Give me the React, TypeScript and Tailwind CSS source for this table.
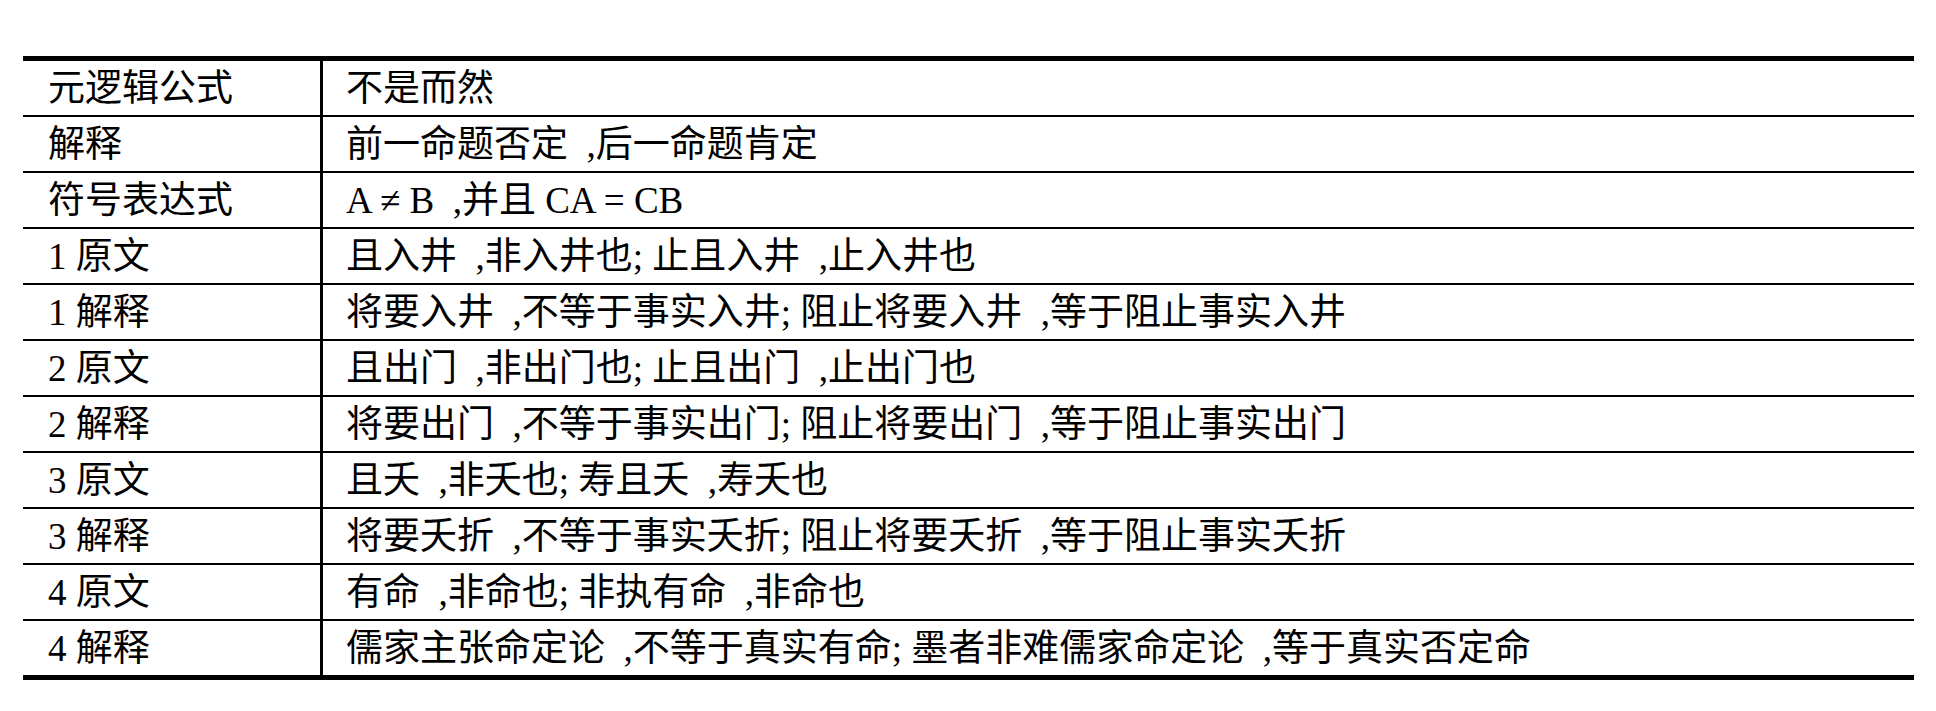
const rows: [string, string][] = [
  ['元逻辑公式', '不是而然'],
  ['解释', '前一命题否定\u2002,后一命题肯定'],
  ['符号表达式', 'A ≠ B\u2002,并且 CA = CB'],
  ['1 原文', '且入井\u2002,非入井也; 止且入井\u2002,止入井也'],
  ['1 解释', '将要入井\u2002,不等于事实入井; 阻止将要入井\u2002,等于阻止事实入井'],
  ['2 原文', '且出门\u2002,非出门也; 止且出门\u2002,止出门也'],
  ['2 解释', '将要出门\u2002,不等于事实出门; 阻止将要出门\u2002,等于阻止事实出门'],
  ['3 原文', '且夭\u2002,非夭也; 寿且夭\u2002,寿夭也'],
  ['3 解释', '将要夭折\u2002,不等于事实夭折; 阻止将要夭折\u2002,等于阻止事实夭折'],
  ['4 原文', '有命\u2002,非命也; 非执有命\u2002,非命也'],
  ['4 解释', '儒家主张命定论\u2002,不等于真实有命; 墨者非难儒家命定论\u2002,等于真实否定命'],
]

export default function App() {
  return (
    <div className="w-[1936px] h-[711px] bg-white pt-[56px] pl-[23px]">
      <div
        className="w-[1891px] border-t-[5px] border-b-[5px] border-black text-black text-[37px] leading-none"
        style={{ fontFamily: '"Liberation Serif", "Noto Sans CJK SC", serif' }}
      >
        {rows.map(([label, value], i) => (
          <div
            key={i}
            className={`flex ${i < rows.length - 1 ? 'h-[56px] border-b-2 border-black' : 'h-[54px]'}`}
          >
            <div className="w-[300px] shrink-0 flex items-center pl-[25px] border-r-[3px] border-black">
              {label}
            </div>
            <div className="flex items-center pl-[23px] whitespace-pre">{value}</div>
          </div>
        ))}
      </div>
    </div>
  )
}
